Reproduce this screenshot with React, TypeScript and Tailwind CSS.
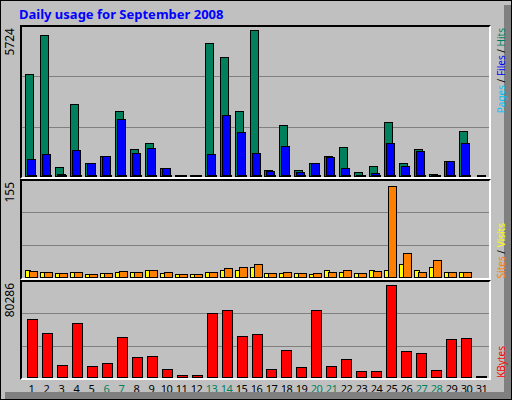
const hits = [73,34,166,103,162,155,110,148,142,167,175,175,42,56,110,29,169,124,169,162,155,146,171,165,121,162,148,173,160,130,176]
const files = [158,153,173,149,162,155,118,152,147,167,175,175,153,114,131,152,170,145,171,162,156,167,174,172,142,165,150,174,160,142,176]
const sites = [269,270,271,270,272,271,269,270,268,270,272,272,270,266,265,262,271,270,271,271,270,268,271,269,184,251,270,258,270,270,276]
const visits = [268,270,271,270,272,271,270,270,268,271,272,272,270,268,268,265,271,271,271,272,268,270,271,268,268,262,268,265,270,270,276]
const kb = [318,332,364,322,365,362,336,356,355,368,374,374,312,309,335,333,368,349,366,309,365,358,370,370,284,350,352,369,338,337,376]
const weekend = [6, 7, 13, 14, 20, 21, 27, 28]

const Bar = ({ h, color, className = '' }: { h: number; color: string; className?: string }) =>
	h > 0 ? (
		<div className={`w-[9px] border border-black ${className}`} style={{ height: h, background: color }} />
	) : null

const Grid = ({ lines }: { lines: number[] }) => (
	<>
		{lines.map((t) => (
			<div key={t} className="absolute left-0 right-0 h-px bg-[#808080]" style={{ top: t }} />
		))}
	</>
)

const Side = ({ children, h, top }: { children: React.ReactNode; h: number; top?: boolean }) => (
	<div className={`w-[20px] flex justify-center ${top ? 'items-start pt-[3px]' : 'items-end pb-[2px]'}`} style={{ height: h }}>
		<div className="[writing-mode:vertical-rl] rotate-180 text-[10px] leading-[10px] font-['Liberation_Mono']">
			{children}
		</div>
	</div>
)

const Axis = ({ h, v }: { h: number; v: string }) => (
	<div className="flex items-start justify-center pt-[3px]" style={{ height: h }}>
		<span className="[writing-mode:vertical-rl] rotate-180">{v}</span>
	</div>
)

export default function App() {
	return (
		<div className="w-[512px] h-[400px] bg-[#c0c0c0] border border-black relative font-['Liberation_Sans']">
			<div className="absolute right-0 top-[4px] w-[7px] bottom-0 bg-[#808080]" />
			<div className="absolute left-[4px] right-0 bottom-0 h-[7px] bg-[#808080]" />
			<div className="h-[24px] pl-[18px] pt-[6px] text-[13px] leading-[14px] font-bold text-[#0000ff] font-['Liberation_Mono']">
				Daily usage for September 2008
			</div>
			<div className="flex">
				<div className="w-[19px] flex flex-col text-[12px] leading-[12px]">
					<Axis h={154} v="5724" />
					<Axis h={101} v="155" />
					<Axis h={100} v="80286" />
				</div>
				<div className="w-[472px] flex flex-col">
					<div className="relative h-[154px] border-2 border-black border-r-white border-b-white overflow-hidden">
						<Grid lines={[49, 100]} />
						<div className="absolute inset-x-0 bottom-0 flex pl-[3px]">
							{hits.map((h, i) => (
								<div key={i} className="w-[15px] h-[150px] relative">
									<div className="absolute left-0 bottom-0"><Bar h={176 - h} color="#00805c" /></div>
									<div className="absolute left-[2px] bottom-0"><Bar h={176 - files[i]} color="#0000ff" /></div>
									<div className="absolute left-[3px] bottom-0 w-[9px] h-[2px] bg-black" />
								</div>
							))}
						</div>
					</div>
					<div className="relative h-[101px] border-2 border-black border-r-white border-b-white overflow-hidden">
						<Grid lines={[31, 64]} />
						<div className="absolute inset-x-0 bottom-0 flex pl-[3px]">
							{sites.map((s, i) => (
								<div key={i} className="w-[15px] h-[98px] relative">
									<div className="absolute left-0 bottom-0"><Bar h={276 - visits[i]} color="#ffff00" className="!w-[6px]" /></div>
									<div className="absolute left-[4px] bottom-0"><Bar h={276 - s} color="#ff8000" /></div>
								</div>
							))}
						</div>
					</div>
					<div className="relative h-[100px] border-2 border-black border-r-white border-b-white overflow-hidden">
						<Grid lines={[31, 64]} />
						<div className="absolute inset-x-0 bottom-0 flex pl-[3px]">
							{kb.map((k, i) => (
								<div key={i} className="w-[15px] h-[97px] relative">
									<div className="absolute left-[2px] bottom-0"><Bar h={377 - k} color="#ff0000" className="!w-[11px]" /></div>
								</div>
							))}
						</div>
					</div>
					<div className="flex pl-[4px] pt-[2px] text-[11px] leading-[14px] tracking-[-0.5px]">
						{hits.map((_, i) => (
							<div key={i} className={`w-[15px] text-center ${weekend.includes(i + 1) ? 'text-[#00805c]' : 'text-black'}`}>
								{i + 1}
							</div>
						))}
					</div>
				</div>
				<div className="flex flex-col">
					<Side h={154} top>
						<span className="text-[#00c0ff]">Pages</span> / <span className="text-[#0000ff]">Files</span> / <span className="text-[#00805c]">Hits</span>
					</Side>
					<Side h={101}>
						<span className="text-[#ff8000]">Sites</span> / <span className="text-[#ffff00]">Visits</span>
					</Side>
					<Side h={100}>
						<span className="text-[#ff0000]">KBytes</span>
					</Side>
				</div>
			</div>
		</div>
	)
}
